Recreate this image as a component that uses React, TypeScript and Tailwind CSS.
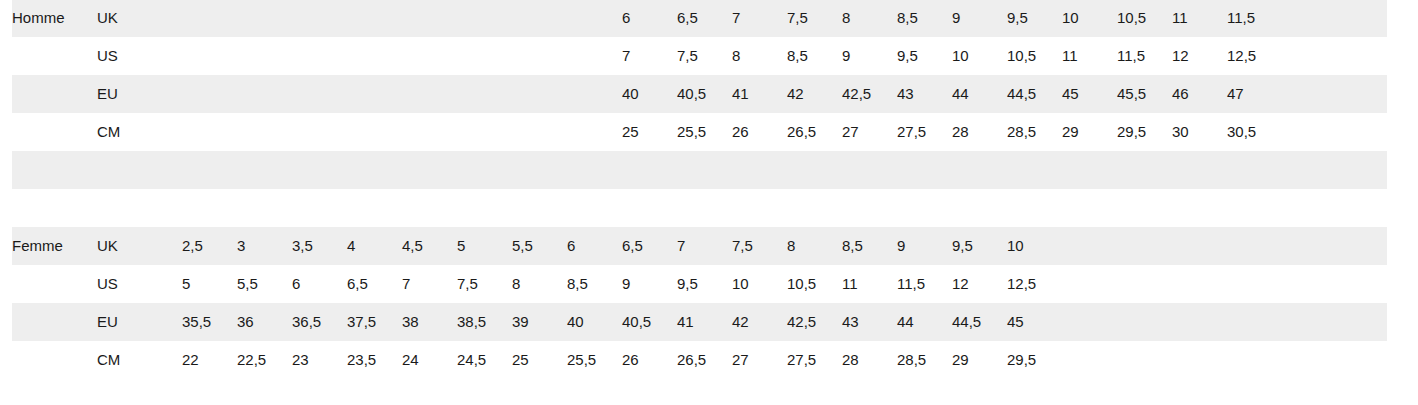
const homme = {
  label: "Homme",
  start: 8,
  rows: [
    { name: "UK", values: ["6", "6,5", "7", "7,5", "8", "8,5", "9", "9,5", "10", "10,5", "11", "11,5"] },
    { name: "US", values: ["7", "7,5", "8", "8,5", "9", "9,5", "10", "10,5", "11", "11,5", "12", "12,5"] },
    { name: "EU", values: ["40", "40,5", "41", "42", "42,5", "43", "44", "44,5", "45", "45,5", "46", "47"] },
    { name: "CM", values: ["25", "25,5", "26", "26,5", "27", "27,5", "28", "28,5", "29", "29,5", "30", "30,5"] },
    { name: "", values: [] as string[] },
  ],
};

const femme = {
  label: "Femme",
  start: 0,
  rows: [
    { name: "UK", values: ["2,5", "3", "3,5", "4", "4,5", "5", "5,5", "6", "6,5", "7", "7,5", "8", "8,5", "9", "9,5", "10"] },
    { name: "US", values: ["5", "5,5", "6", "6,5", "7", "7,5", "8", "8,5", "9", "9,5", "10", "10,5", "11", "11,5", "12", "12,5"] },
    { name: "EU", values: ["35,5", "36", "36,5", "37,5", "38", "38,5", "39", "40", "40,5", "41", "42", "42,5", "43", "44", "44,5", "45"] },
    { name: "CM", values: ["22", "22,5", "23", "23,5", "24", "24,5", "25", "25,5", "26", "26,5", "27", "27,5", "28", "28,5", "29", "29,5"] },
  ],
};

type Table = typeof homme;

function SizeTable({ table }: { table: Table }) {
  return (
    <div className="flex flex-col">
      {table.rows.map((row, i) => (
        <div
          key={i}
          className={`grid h-[38px] grid-cols-[85px_85px_repeat(20,55px)] items-center ${
            i % 2 === 0 ? "bg-[#eeeeee]" : "bg-white"
          }`}
        >
          <div>{i === 0 ? table.label : ""}</div>
          <div>{row.name}</div>
          {Array.from({ length: table.start }).map((_, k) => (
            <div key={"e" + k} />
          ))}
          {row.values.map((v, k) => (
            <div key={k}>{v}</div>
          ))}
        </div>
      ))}
    </div>
  );
}

export default function App() {
  return (
    <main
      className="min-h-screen bg-white pl-[12px] pr-[31px] text-[15px] text-[#1a1a1a]"
      style={{ fontFamily: '"Liberation Sans", Arial, sans-serif' }}
    >
      <div className="-mt-px">
        <SizeTable table={homme} />
      </div>
      <div className="mt-[38px]">
        <SizeTable table={femme} />
      </div>
    </main>
  );
}
